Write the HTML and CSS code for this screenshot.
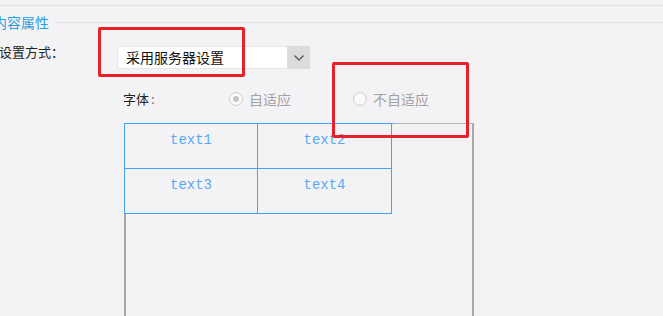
FILE: index.html
```html
<!DOCTYPE html>
<html lang="zh-CN">
<head>
  <meta charset="UTF-8" />
  <title>内容属性</title>
  <link rel="stylesheet" href="styles.css">
</head>
<body>
  <div class="topbar"></div>

  <div class="section-title">
    <span>内容属性</span>
    <div class="section-line"></div>
  </div>

  <div class="setting-row">
    <label class="setting-label">设置方式：</label>
    <div class="combo">
      <div class="combo-value">采用服务器设置</div>
      <div class="combo-btn">
        <svg width="12" height="8" viewBox="0 0 12 8"><polyline points="1.5,1.5 6,6 10.5,1.5" fill="none" stroke="#5a5a5a" stroke-width="1.4"/></svg>
      </div>
    </div>
  </div>

  <div class="font-row">
    <span class="font-label">字体<span class="colon">:</span></span>
    <span class="radio-item first">
      <span class="radio checked"></span>
      <span class="radio-text">自适应</span>
    </span>
    <span class="radio-item second">
      <span class="radio"></span>
      <span class="radio-text">不自适应</span>
    </span>
  </div>

  <div class="canvas">
    <div class="grid">
      <div class="cell">text1</div>
      <div class="cell">text2</div>
      <div class="cell">text3</div>
      <div class="cell">text4</div>
    </div>
  </div>

  <div class="mark mark-combo"></div>
  <div class="mark mark-radio"></div>
</body>
</html>
```

FILE: styles.css
```css
body {
  margin: 0;
  background-color: #f3f3f5;
  font-family: "Noto Sans CJK SC", "Noto Sans", sans-serif;
  font-size: 13px;
  color: #222;
  overflow: hidden;
  height: 316px;
}
.topbar {
  height: 5px;
  border-bottom: 1px solid #e2e2e4;
}
.section-title {
  display: flex;
  align-items: center;
  margin-top: 8px;
  margin-left: -7px;
  height: 16px;
  line-height: 16px;
  font-size: 14px;
  color: #2aa0e0;
}
.section-line {
  flex: 1;
  margin-left: 6px;
  border-top: 1px solid #e2e2e4;
}
.setting-row {
  display: flex;
  align-items: flex-start;
  margin-top: 14px;
}
.setting-label {
  width: 118px;
  margin-left: -1px;
  line-height: 16px;
}
.combo {
  display: flex;
  margin-top: 2px;
  height: 23px;
}
.combo-value {
  width: 170px;
  padding-left: 8px;
  background: #fff;
  border: 1px solid #e6e6e6;
  border-right: none;
  box-sizing: border-box;
  font-size: 14px;
  line-height: 21px;
  color: #111;
}
.combo-btn {
  width: 23px;
  background: #dcdcde;
  display: flex;
  align-items: center;
  justify-content: center;
}
.font-row {
  display: flex;
  align-items: center;
  margin-top: 22px;
  height: 16px;
  line-height: 16px;
}
.font-label {
  margin-left: 123px;
  width: 106px;
}
.colon {
  color: #7a6a8a;
  margin-left: 2px;
}
.radio-item {
  display: flex;
  align-items: center;
  color: #a2a2a2;
  font-size: 14px;
}
.radio-item.first {
  width: 124px;
}
.radio {
  width: 12px;
  height: 12px;
  border: 1px solid #cfcfcf;
  border-radius: 50%;
  background: radial-gradient(circle, #fbfbfb 55%, #ececec 100%);
  margin-right: 6px;
  position: relative;
}
.radio.checked::after {
  content: "";
  position: absolute;
  left: 3px;
  top: 3px;
  width: 6px;
  height: 6px;
  border-radius: 50%;
  background: #c4c4c4;
}
.canvas {
  margin-top: 16px;
  margin-left: 124px;
  width: 346px;
  height: 240px;
  border-top: 1px solid #b4b4b4;
  border-left: 2px solid #a8a8a8;
  border-right: 2px solid #a8a8a8;
}
.grid {
  display: grid;
  grid-template-columns: 133px 134px;
  grid-template-rows: 45px 45px;
  margin-top: -1px;
  margin-left: -2px;
  width: 268px;
  border-left: 1px solid #45a2ff;
  border-top: 1px solid #45a2ff;
  background: #f3f3f5;
}
.cell {
  border-right: 1px solid #45a2ff;
  border-bottom: 1px solid #45a2ff;
  text-align: center;
  padding-top: 8px;
  font-family: "Liberation Mono", monospace;
  font-size: 14px;
  line-height: 16px;
  color: #5aa8f2;
}
.mark {
  position: absolute;
  border: 3px solid #e8202a;
  border-radius: 2px;
  box-sizing: border-box;
}
.mark-combo {
  left: 98px;
  top: 27px;
  width: 147px;
  height: 50px;
}
.mark-radio {
  left: 332px;
  top: 62px;
  width: 137px;
  height: 76px;
}
```
